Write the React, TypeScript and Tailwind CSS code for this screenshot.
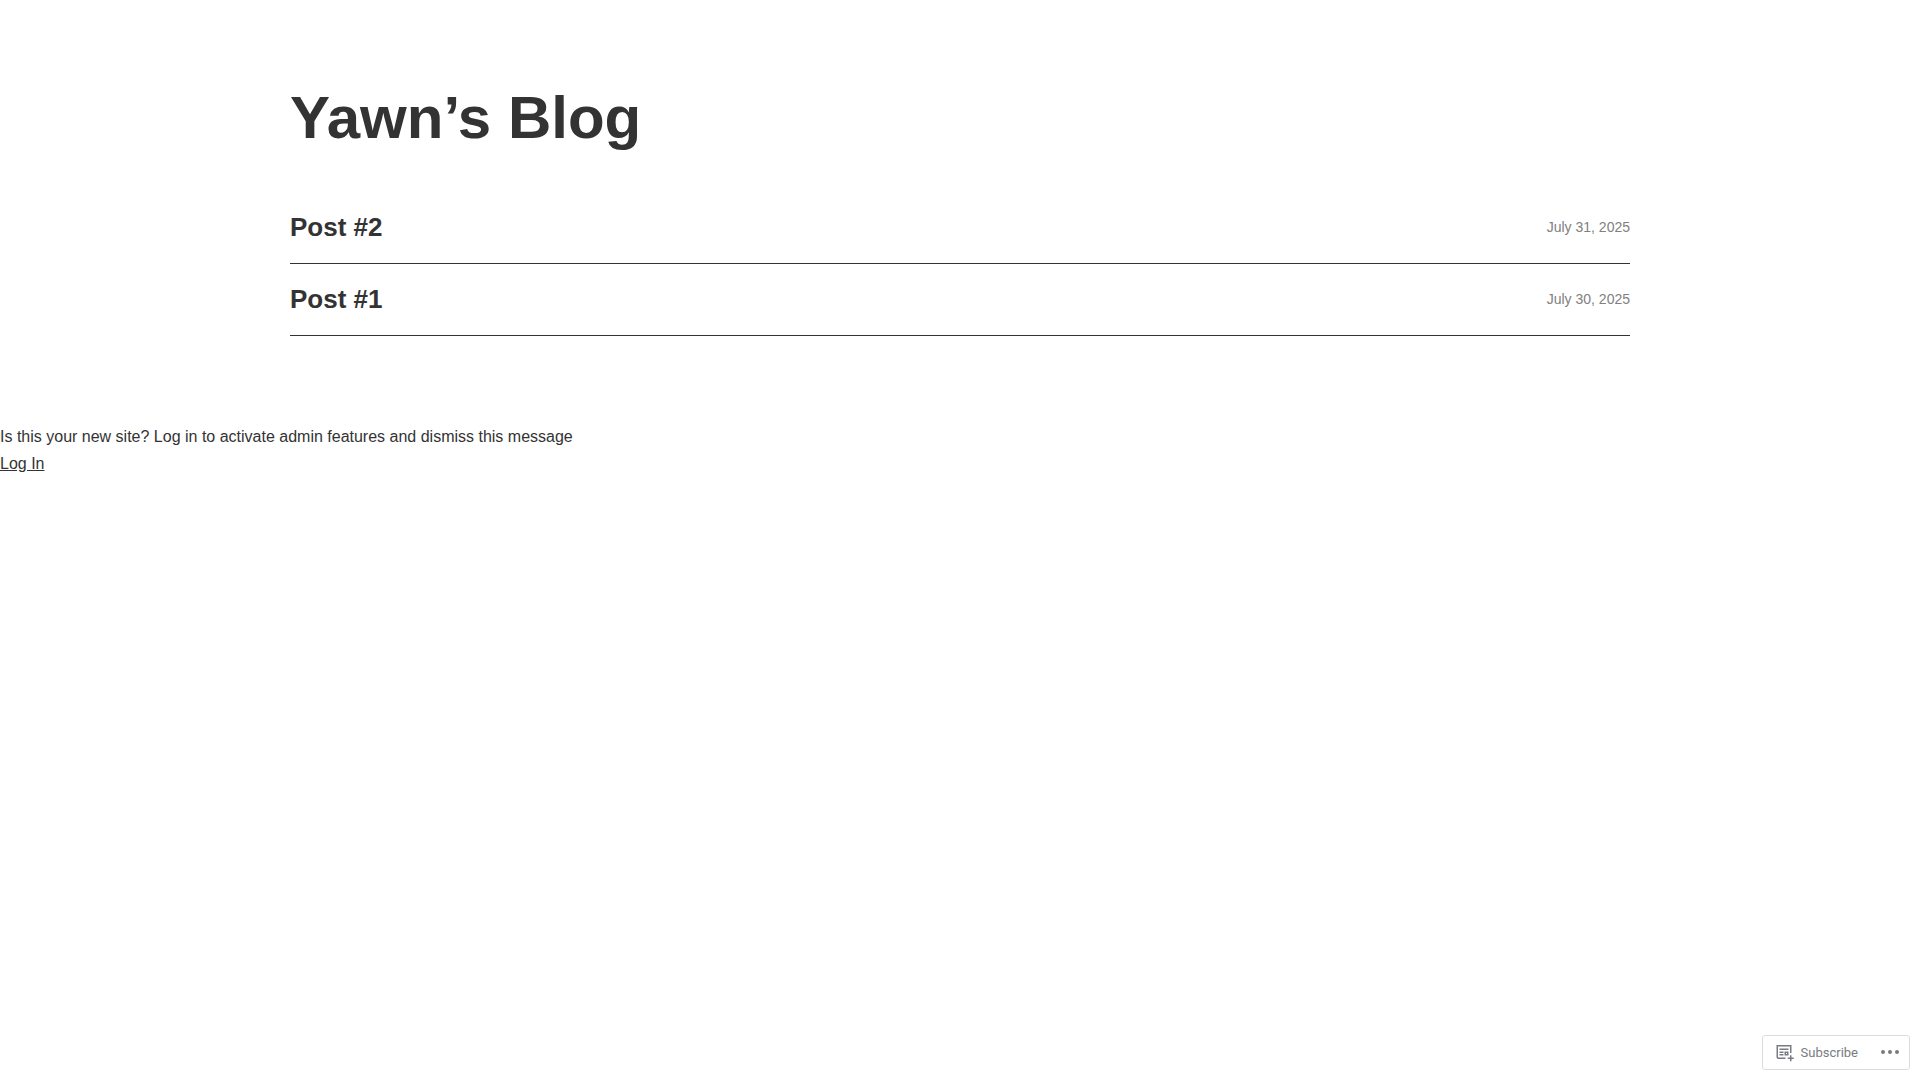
import React from "react";

const posts = [
  { title: "Post #2", date: "July 31, 2025" },
  { title: "Post #1", date: "July 30, 2025" },
];

function SubscribeIcon() {
  return (
    <svg width="20" height="20" viewBox="0 0 20 20" fill="currentColor" aria-hidden="true">
      <path
        fillRule="evenodd"
        clipRule="evenodd"
        d="m4 4.5h12v6.5h1.5v-6.5-1.5h-1.5-12-1.5v1.5 10.5c0 1.1046.89543 2 2 2h7v-1.5h-7c-.27614 0-.5-.2239-.5-.5zm10.5 2h-9v1.5h9zm-5 3h-4v1.5h4zm3.5 1.5h-1v1h1zm-1-1.5h-1.5v1.5 1 1.5h1.5 1 1.5v-1.5-1-1.5h-1.5zm-2.5 2.5h-4v1.5h4zm6.5 1.25h1.5v2.25h2.25v1.5h-2.25v2.25h-1.5v-2.25h-2.25v-1.5h2.25z"
      />
    </svg>
  );
}

function EllipsisIcon() {
  return (
    <svg width="24" height="24" viewBox="0 0 24 24" fill="currentColor" aria-hidden="true">
      <circle cx="5" cy="12" r="2" />
      <circle cx="12" cy="12" r="2" />
      <circle cx="19" cy="12" r="2" />
    </svg>
  );
}

function ActionBar() {
  return (
    <div className="fixed right-[10px] bottom-[10px] flex h-[35px] items-center rounded-[3px] border border-[#dcdcde] bg-white pb-px pl-[11px] pr-[7px] font-['Roboto',sans-serif] text-[13px] leading-[25px] text-[#787c82]">
      <button type="button" className="flex items-center gap-[7px]">
        <SubscribeIcon />
        Subscribe
      </button>
      <button type="button" className="ml-5" aria-label="More">
        <EllipsisIcon />
      </button>
    </div>
  );
}

export default function App() {
  return (
    <div className="bg-white font-['Liberation_Sans',Arial,sans-serif] text-base leading-[27px] text-[#333]">
      <main className="mx-auto max-w-[1340px] pt-20 pb-[87px]">
        <h1 className="text-[60px] leading-[75px] font-bold">
          <a href="#">Yawn’s Blog</a>
        </h1>
        <ul className="mt-[37px]">
          {posts.map(post => (
            <li
              key={post.title}
              className="flex items-center justify-between border-b border-[#333] pt-[18px] pb-[19px]"
            >
              <h2 className="text-[26px] leading-[34px] font-bold">
                <a href="#">{post.title}</a>
              </h2>
              <time className="text-sm text-[#808080]">{post.date}</time>
            </li>
          ))}
        </ul>
      </main>
      <footer>
        <p>Is this your new site? Log in to activate admin features and dismiss this message</p>
        <a href="#" className="underline">Log In</a>
      </footer>
      <ActionBar />
    </div>
  );
}
